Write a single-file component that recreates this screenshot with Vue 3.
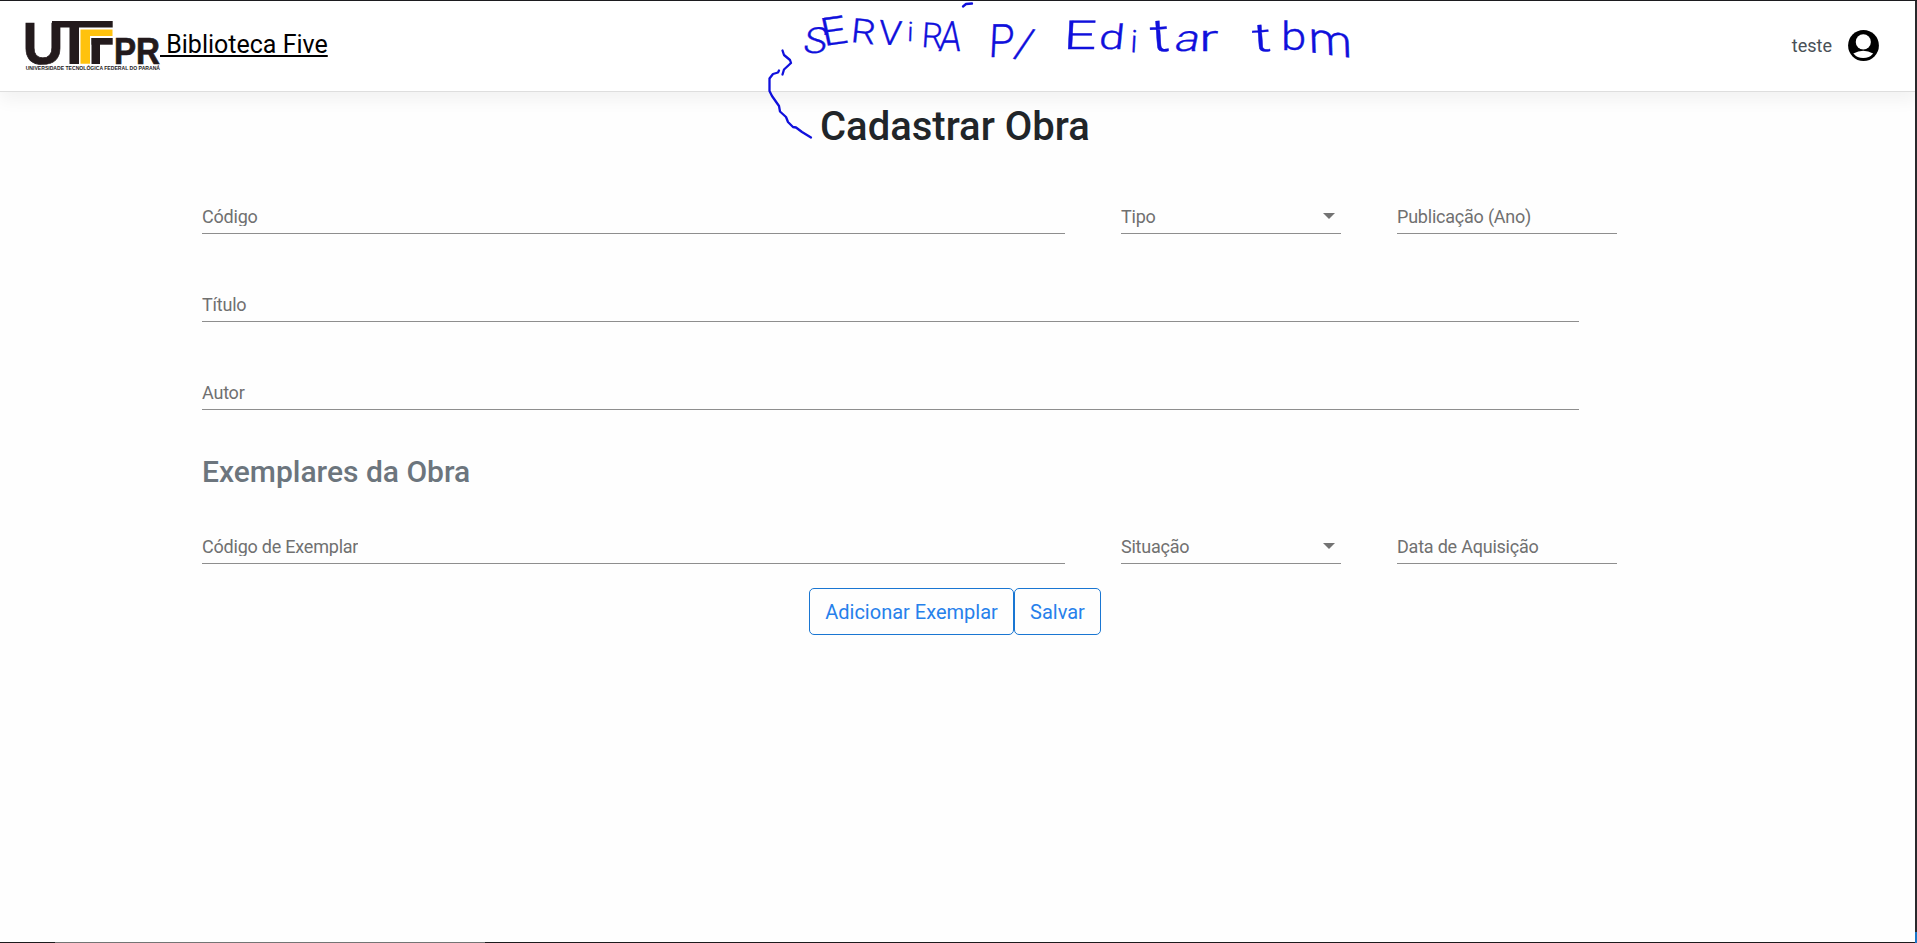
<script setup>
const workFields = [
  { label: 'Código', clipped: true },
  { label: 'Tipo', select: true },
  { label: 'Publicação (Ano)' },
]
const wideFields = ['Título', 'Autor']
const copyFields = [
  { label: 'Código de Exemplar', clipped: true },
  { label: 'Situação', select: true },
  { label: 'Data de Aquisição' },
]

// Each letter of the note: character, left, baseline, font size, horizontal scale, tilt, slant
const note = [
  [['S', 802, 53, 36, 1.1, 0, -10], ['E', 824, 46, 39, 1.15, -8, 4], ['R', 850, 42, 34, 1.15, 6, 0], ['V', 878, 44, 34, 1.1, 4, 0], ['i', 907, 41, 27, 1, 2, 0], ['R', 921, 47, 35, 0.95, 4, 0], ['A', 938, 51, 42, 0.85, 0, -6]],
  [['P', 988, 57, 46, 0.9, 0, -3], ['/', 1013, 56, 43, 1, 13, 0]],
  [['E', 1063, 49, 40, 1.45, 0, -3], ['d', 1098, 49, 34, 1.35, 0, -6], ['i', 1130, 52, 31, 1, 3, 0], ['t', 1151, 52, 46, 1.35, -4, 0], ['a', 1173, 51, 37, 1.25, 0, -12], ['r', 1199, 51, 36, 1.6, 0, 0]],
  [['t', 1253, 52, 40, 1.5, -4, 0], ['b', 1281, 50, 38, 1.2, 0, 0], ['m', 1309, 52, 43, 1.15, 8, 10]],
]
const place = ([, x, y, , scale, tilt, slant]) => `translate(${x} ${y}) rotate(${tilt}) skewX(${slant}) scale(${scale} 1)`
</script>

<template>
  <div class="screen">
    <header class="navbar">
      <a class="brand">
        <svg class="logo" width="135" height="56" viewBox="25 18 135 56">
          <g fill="#231a1c">
            <text x="22.6" y="63.7" class="mark" font-size="59" textLength="41" lengthAdjust="spacingAndGlyphs">U</text>
            <rect x="52" y="21" width="60.7" height="6.5" />
            <rect x="69.5" y="21" width="9.5" height="43" />
            <rect x="91.5" y="38" width="21.2" height="6.7" />
            <rect x="91.5" y="38" width="8.5" height="26" />
            <text x="114" y="63.7" class="mark" font-size="36" textLength="46" lengthAdjust="spacingAndGlyphs">PR</text>
            <text x="25.7" y="70.3" class="motto" textLength="134.3" lengthAdjust="spacingAndGlyphs">UNIVERSIDADE TECNOLÓGICA FEDERAL DO PARANÁ</text>
          </g>
          <path d="M80.5 29.5H112.5V36H90V63.8H80.5Z" fill="#ffc20e" />
        </svg><span class="name">&nbsp;Biblioteca Five</span>
      </a>
      <div class="user">
        <span>teste</span>
        <svg width="31" height="31" viewBox="0 0 32 32">
          <circle cx="16" cy="16" r="15.9" fill="#000" />
          <circle cx="15.8" cy="12.3" r="7.8" fill="#fff" />
          <path d="M5.5 24.2Q15.7 18.7 26 24.2Q22 29 15.7 29Q9.5 29 5.5 24.2Z" fill="#fff" />
        </svg>
      </div>
    </header>

    <main>
      <h1>Cadastrar Obra</h1>
      <div class="row first">
        <div v-for="f in workFields" :key="f.label" class="field">
          <span :class="{ clipped: f.clipped }">{{ f.label }}</span>
          <i v-if="f.select" class="caret"></i>
        </div>
      </div>
      <div v-for="label in wideFields" :key="label" class="field wide"><span>{{ label }}</span></div>
      <h2>Exemplares da Obra</h2>
      <div class="row">
        <div v-for="f in copyFields" :key="f.label" class="field">
          <span :class="{ clipped: f.clipped }">{{ f.label }}</span>
          <i v-if="f.select" class="caret"></i>
        </div>
      </div>
      <div class="actions">
        <button class="add">Adicionar Exemplar</button>
        <button class="save">Salvar</button>
      </div>
    </main>

    <svg class="ink" width="1400" height="150" viewBox="0 0 1400 150">
      <g v-for="(word, w) in note" :key="w">
        <text v-for="(g, i) in word" :key="i" :font-size="g[3]" :transform="place(g)">{{ g[0] }}</text>
      </g>
      <path d="M963 6.5L966 4L972 3.5" />
      <path d="M782.5 50.5L784 55L790 60L791 63L784 69.5L782.5 74.5" />
      <path d="M779 70.5L778 72.5L773 74L769.5 78.5V91L772 96L779 106L780 111.5L786 117L788 122L793 127L796 127.5L802 132L811 137.5" />
    </svg>
    <i class="edge-right"></i>
    <i class="edge-bottom"></i>
  </div>
</template>

<style>
body { margin: 0; overflow: hidden; }
</style>

<style scoped>
* { box-sizing: border-box; }
.screen { position: relative; width: 1917px; height: 943px; background: #fefefe; border-top: 1px solid #1c1b1f; font-family: Roboto, sans-serif; overflow: hidden; }
.navbar { height: 91px; display: flex; justify-content: space-between; align-items: flex-start; padding: 17px 38px 0 25px; background: #fff; border-bottom: 1px solid #dedede; box-shadow: 0 8px 16px rgba(0, 0, 0, .05); }
.brand { display: flex; color: #000; font-size: 25px; line-height: 28px; }
.logo { display: block; overflow: visible; }
.mark { font-family: "Liberation Sans", Arial, sans-serif; font-weight: 700; stroke: #231a1c; stroke-width: .7; }
.motto { font-family: "Liberation Sans", Arial, sans-serif; font-weight: 700; font-size: 5px; }
.name { margin-top: 13px; text-decoration: underline; text-underline-offset: 2px; text-decoration-thickness: 2px; }
.user { display: flex; align-items: center; gap: 16px; height: 31px; margin-top: 12px; font-size: 18px; color: #495057; }
main { display: flex; flex-direction: column; padding-left: 202px; }
h1 { margin: 11px 0 0; padding-left: 618px; font-size: 40px; line-height: 48px; font-weight: 500; color: #212529; }
.row { display: grid; grid-template-columns: 863px 220px 220px; column-gap: 56px; }
.first { margin-top: 52px; }
.field { display: flex; justify-content: space-between; height: 31px; border-bottom: 1px solid #8e8e8e; font-size: 18px; line-height: 22px; letter-spacing: -.22px; color: #707070; }
.field span { height: 27px; padding-top: 3px; }
.field .clipped { height: 23px; overflow: hidden; }
.wide { width: 1377px; margin-top: 57px; }
.caret { width: 0; height: 0; margin: 10px 6px 0 0; border: 6px solid transparent; border-top: 6px solid #737373; border-bottom: 0; }
h2 { margin: 44px 0 0; font-size: 30px; line-height: 36px; font-weight: 500; color: #6c757d; }
.row:not(.first) { margin-top: 43px; }
.actions { display: flex; margin-top: 24px; padding-left: 607px; }
button { height: 47px; padding: 0; background: transparent; border: 1px solid #1976d2; border-radius: 5px; font-family: inherit; font-size: 20px; color: #2680eb; }
.add { width: 205px; }
.save { width: 87px; }
.ink { position: absolute; left: 0; top: -1px; fill: #1010dc; font-family: Roboto, sans-serif; font-weight: 300; }
.ink text { stroke: #1010dc; stroke-width: .35; }
.ink path { fill: none; stroke: #1010dc; stroke-width: 2.3; stroke-linecap: round; stroke-linejoin: round; }
.edge-right { position: absolute; top: 0; right: 0; width: 2px; height: 942px; background: linear-gradient(#29292c 931px, #1976c8 931px); }
.edge-bottom { position: absolute; left: 0; bottom: 0; width: 1915px; height: 1px; background: linear-gradient(90deg, #1c1a1c 55px, #747474 55px, #747474 485px, #1c1a1c 485px); }
</style>
